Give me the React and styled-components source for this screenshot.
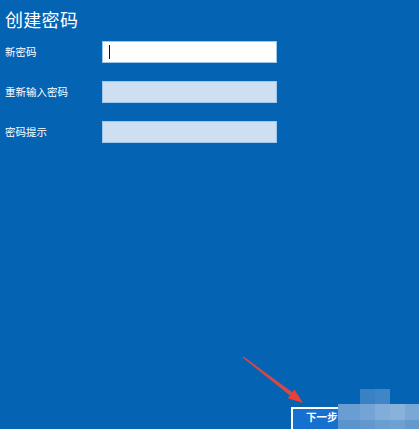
import React from 'react'
import styled, { createGlobalStyle } from 'styled-components'

const Global = createGlobalStyle`
  html, body {
    margin: 0;
    padding: 0;
    background: #0563b3;
    overflow: hidden;
  }
`

const Page = styled.div`
  position: relative;
  width: 419px;
  height: 429px;
  background: #0563b3;
  display: flex;
  flex-direction: column;
  font-family: "Noto Sans CJK SC", "Noto Sans", sans-serif;
  color: #fff;
  overflow: hidden;
`

const Title = styled.h1`
  margin: 0;
  padding: 6px 0 0 5px;
  height: 30px;
  font-size: 18px;
  font-weight: 400;
  line-height: 26px;
  letter-spacing: 0.3px;
`

const Form = styled.div`
  display: grid;
  grid-template-columns: 97px 175px;
  row-gap: 18px;
  padding: 5px 0 0 5px;
`

const Label = styled.label`
  font-size: 10.5px;
  line-height: 22px;
`

const Input = styled.div`
  position: relative;
  box-sizing: border-box;
  height: 22px;
  border: 1px solid #9cc8ef;
  background: ${p => (p.$active ? '#ffffff' : '#cddff1')};
`

const Caret = styled.span`
  position: absolute;
  left: 6px;
  top: 3px;
  width: 1px;
  height: 14px;
  background: #111;
`

const Footer = styled.div`
  margin-top: auto;
  display: flex;
  align-items: flex-start;
  padding-left: 291px;
  height: 22px;
`

const NextButton = styled.button`
  box-sizing: border-box;
  flex: none;
  width: 70px;
  height: 26px;
  border: 2px solid #ffffff;
  background: #1670cf;
  color: #fff;
  font-family: "Noto Sans CJK SC", sans-serif;
  font-size: 10.5px;
  font-weight: 700;
  text-align: left;
  padding: 0 0 6px 13px;
  line-height: 16px;
`

const Arrow = styled.svg`
  position: absolute;
  left: 238px;
  top: 350px;
`

const Mosaic = styled.div`
  position: absolute;
  left: 338px;
  top: 389px;
  width: 81px;
  display: grid;
  grid-template-columns: 22px 15px 15px 15px 14px;
  grid-template-rows: 15px 16px 9px;
`

const Tile = styled.div`
  background: ${p => p.$c};
`

const tiles = [
  'transparent', '#3a80c4', '#3f85c7', 'transparent', 'transparent',
  '#6a9ed2', '#74a4d5', '#80aed9', '#88b2da', '#7aa8d6',
  '#5b94cc', '#6298ce', '#6a9dd0', '#6ea1d2', '#6399cd',
]

const fields = [
  { label: '新密码', active: true },
  { label: '重新输入密码' },
  { label: '密码提示' },
]

export default function App() {
  return (
    <Page>
      <Global />
      <Title>创建密码</Title>
      <Form>
        {fields.map(f => (
          <React.Fragment key={f.label}>
            <Label>{f.label}</Label>
            <Input $active={f.active}>{f.active && <Caret />}</Input>
          </React.Fragment>
        ))}
      </Form>
      <Footer>
        <NextButton>下一步</NextButton>
      </Footer>
      <Arrow width="70" height="60" viewBox="0 0 70 60">
        <path d="M4.5 7.6 L51.9 45.5 L54.3 42.3 L5.5 6.4 Z" fill="#e8473c" opacity="0.9" />
        <path d="M49.8 48.3 L65 53 L56.4 39.5 Z" fill="#ec3f36" />
      </Arrow>
      <Mosaic>
        {tiles.map((c, i) => (
          <Tile key={i} $c={c} />
        ))}
      </Mosaic>
    </Page>
  )
}
